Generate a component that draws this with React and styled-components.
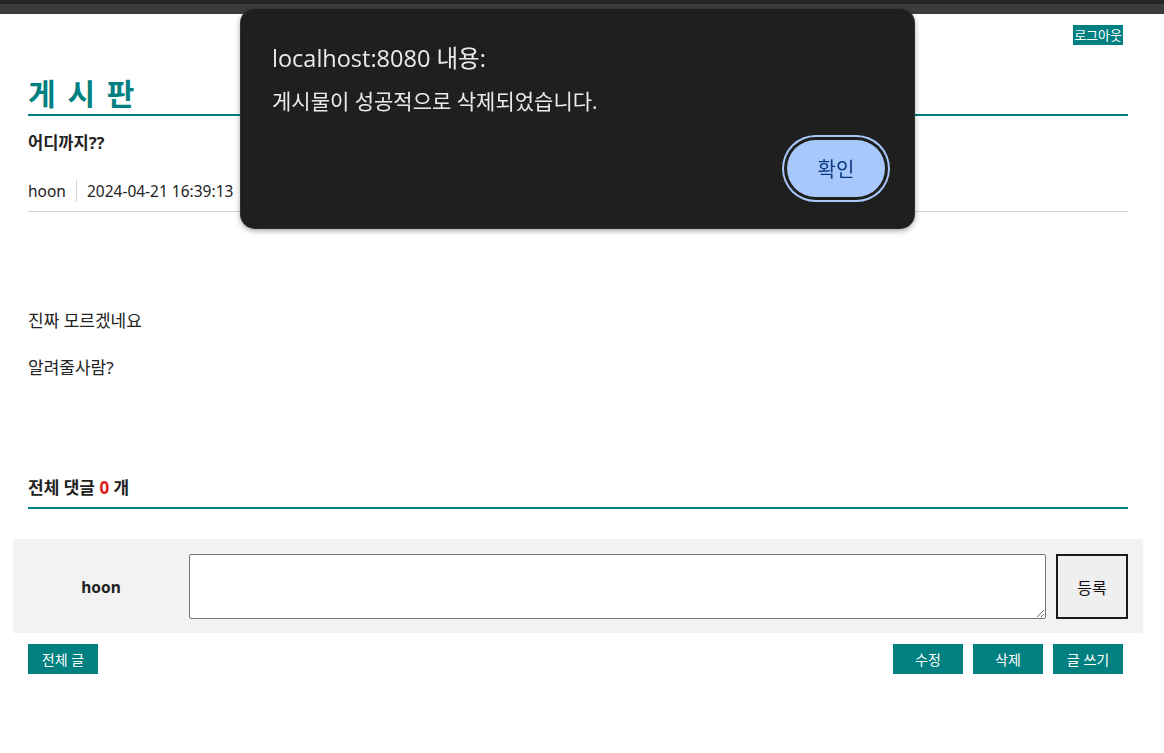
import React from "react";
import styled, { createGlobalStyle } from "styled-components";

const GlobalStyle = createGlobalStyle`
  html, body {
    margin: 0;
    padding: 0;
    background: #fff;
  }
  body {
    font-family: "Noto Sans", "Noto Sans CJK KR", sans-serif;
    color: #222;
  }
`;

const TEAL = "#008080";

const Chrome = styled.div`
  height: 14px;
  background: linear-gradient(#262626 0 4px, #3c3c3c 4px 14px);
`;

const Page = styled.div`
  width: 1100px;
  padding-left: 28px;
  position: relative;
`;

const TopBar = styled.div`
  display: flex;
  justify-content: flex-end;
  padding: 11px 5px 0 0;
`;

const LogoutBtn = styled.button`
  border: none;
  background: ${TEAL};
  color: #fff;
  font-family: inherit;
  font-size: 13px;
  height: 20px;
  line-height: 20px;
  padding: 0 1px;
  cursor: pointer;
`;

const BoardTitle = styled.h1`
  margin: 29px 0 0;
  font-size: 30px;
  line-height: 40px;
  height: 40px;
  font-weight: 700;
  color: ${TEAL};
  letter-spacing: 1px;
  border-bottom: 2px solid ${TEAL};
  word-spacing: 2px;
`;

const PostTitle = styled.div`
  margin-top: 17px;
  font-size: 16.5px;
  line-height: 20px;
  font-weight: 700;
  color: #222;
`;

const Meta = styled.div`
  margin-top: 27px;
  padding-bottom: 9px;
  border-bottom: 1px solid #d3d3d3;
  display: flex;
  align-items: center;
  font-size: 15.5px;
  color: #222;
`;

const MetaItem = styled.span`
  height: 22px;
  line-height: 22px;
  padding: ${(p) => (p.$first ? "0 10px 0 0" : "0 0 0 10px")};
  border-left: ${(p) => (p.$first ? "none" : "1px solid #d3d3d3")};
`;

const Content = styled.div`
  padding-top: 99px;
  font-size: 17px;
  line-height: 20px;
  color: #222;
  p {
    margin: 0 0 27px;
  }
  p:last-child {
    margin: 0;
  }
`;

const CommentHead = styled.div`
  margin-top: 100px;
  padding-bottom: 9px;
  border-bottom: 2px solid ${TEAL};
  font-size: 17px;
  line-height: 20px;
  font-weight: 700;
  color: #222;
`;

const Count = styled.span`
  color: #e0201c;
`;

const CommentBox = styled.div`
  margin: 30px -15px 0;
  height: 94px;
  box-sizing: border-box;
  background: #f2f2f2;
  display: flex;
  align-items: flex-start;
  padding: 15px 15px 0 0;
`;

const Writer = styled.div`
  width: 176px;
  height: 65px;
  display: flex;
  align-items: center;
  justify-content: center;
  font-size: 15.5px;
  font-weight: 700;
  color: #222;
`;

const CommentInput = styled.textarea`
  width: 857px;
  height: 65px;
  box-sizing: border-box;
  border: 1px solid #767676;
  border-radius: 2px;
  background: #fff;
  margin: 0;
  font-family: inherit;
`;

const SubmitBtn = styled.button`
  width: 72px;
  height: 65px;
  margin-left: 10px;
  box-sizing: border-box;
  border: 2px solid #1a1a1a;
  background: #efefef;
  font-family: inherit;
  font-size: 16px;
  color: #111;
`;

const Actions = styled.div`
  margin-top: 11px;
  display: flex;
  justify-content: space-between;
  padding-right: 5px;
`;

const Group = styled.div`
  display: flex;
  gap: 10px;
`;

const TealBtn = styled.button`
  width: 70px;
  height: 30px;
  border: none;
  background: ${TEAL};
  color: #fff;
  font-family: inherit;
  font-size: 14px;
  cursor: pointer;
`;

const Dialog = styled.div`
  position: fixed;
  left: 241px;
  top: 9px;
  width: 673px;
  height: 219px;
  box-sizing: border-box;
  background: #1f1f1f;
  border-radius: 14px;
  box-shadow: 0 2px 6px rgba(0, 0, 0, 0.45), 0 0 0 1px #3a3a3a;
  padding: 34px 24px 26px 31px;
  display: flex;
  flex-direction: column;
  font-family: "Open Sans", "Noto Sans CJK KR", sans-serif;
`;

const DialogTitle = styled.div`
  font-size: 23.5px;
  line-height: 30px;
  color: #e8eaed;
`;

const DialogMessage = styled.div`
  margin-top: 15px;
  font-size: 21px;
  line-height: 26px;
  color: #e8eaed;
`;

const DialogFoot = styled.div`
  margin-top: auto;
  display: flex;
  justify-content: flex-end;
`;

const OkBtn = styled.button`
  width: 98px;
  height: 57px;
  margin: 0 5px 5px 0;
  border: none;
  border-radius: 29px;
  background: #a8c7fa;
  color: #0b3a82;
  font-family: inherit;
  font-size: 20px;
  box-shadow: 0 0 0 3px #1f1f1f, 0 0 0 5px #a8c7fa;
`;

export default function App() {
  return (
    <>
      <GlobalStyle />
      <Chrome />
      <Page>
        <TopBar>
          <LogoutBtn>로그아웃</LogoutBtn>
        </TopBar>
        <BoardTitle>게 시 판</BoardTitle>
        <PostTitle>어디까지??</PostTitle>
        <Meta>
          <MetaItem $first>hoon</MetaItem>
          <MetaItem>2024-04-21 16:39:13</MetaItem>
        </Meta>
        <Content>
          <p>진짜 모르겠네요</p>
          <p>알려줄사람?</p>
        </Content>
        <CommentHead>
          전체 댓글 <Count>0</Count> 개
        </CommentHead>
        <CommentBox>
          <Writer>hoon</Writer>
          <CommentInput />
          <SubmitBtn>등록</SubmitBtn>
        </CommentBox>
        <Actions>
          <TealBtn>전체 글</TealBtn>
          <Group>
            <TealBtn>수정</TealBtn>
            <TealBtn>삭제</TealBtn>
            <TealBtn>글 쓰기</TealBtn>
          </Group>
        </Actions>
      </Page>
      <Dialog role="alertdialog">
        <DialogTitle>localhost:8080 내용:</DialogTitle>
        <DialogMessage>게시물이 성공적으로 삭제되었습니다.</DialogMessage>
        <DialogFoot>
          <OkBtn>확인</OkBtn>
        </DialogFoot>
      </Dialog>
    </>
  );
}
